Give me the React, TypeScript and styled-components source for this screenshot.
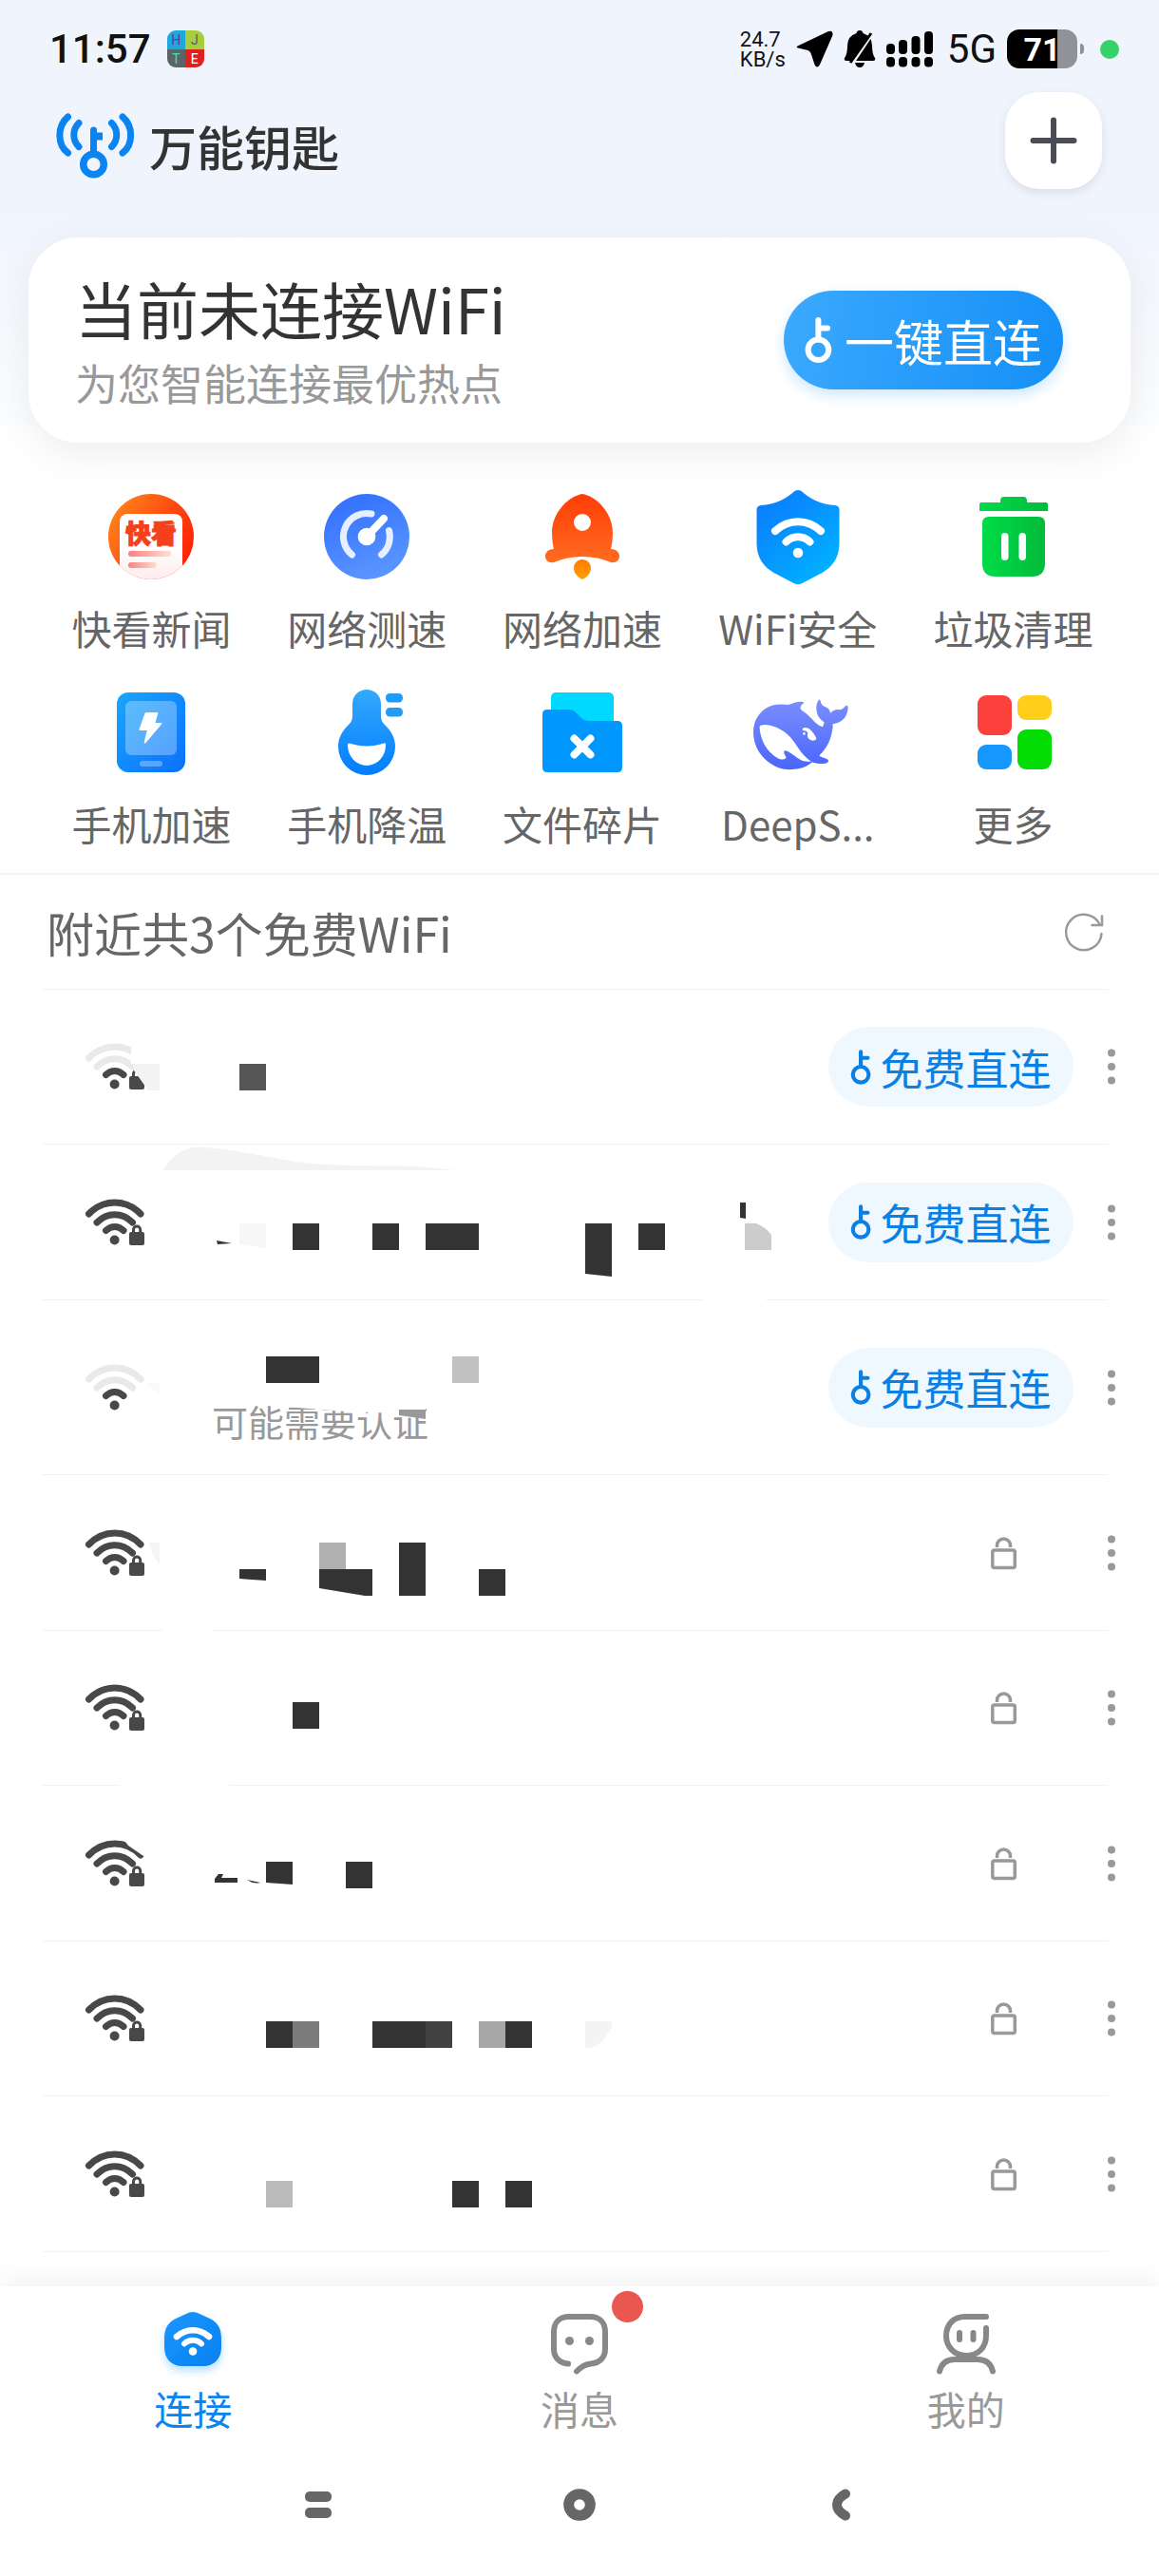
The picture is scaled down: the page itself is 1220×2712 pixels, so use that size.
import React from 'react';
import styled, { createGlobalStyle } from 'styled-components';

const blue = '#0a84f0';
const textDark = '#333';
const textGrey = '#666';
const textLight = '#999';
const line = '#f2f2f2';
const ink = '#333';

const GlobalStyle = createGlobalStyle`
  * {
    box-sizing: border-box;
  }

  body {
    margin: 0;
    background: #fff;
    color: ${textDark};
    font-family: "Noto Sans CJK SC", "Noto Sans", sans-serif;
  }

  button {
    border: 0;
    padding: 0;
    background: none;
    color: inherit;
    font: inherit;
    cursor: pointer;
  }

  a {
    color: inherit;
    text-decoration: none;
  }

  svg {
    display: block;
    flex: none;
    overflow: visible;
  }
`;

const Page = styled.div`
  display: flex;
  flex-direction: column;
  min-height: 100vh;
  background: linear-gradient(#f0f4fd 0, #f0f4fd 220px, #fcfdfe 446px, #fff 450px);
`;

/* Status bar */

const StatusBar = styled.div`
  display: flex;
  align-items: center;
  height: 97px;
  padding: 6px 42px 0 52px;
  color: #111;
  font-family: Roboto, sans-serif;
`;

const Clock = styled.time`
  font-size: 42px;
  font-weight: 500;
  line-height: 48px;
`;

const NoticeIcon = styled.div`
  display: grid;
  grid-template-columns: 1fr 1fr;
  width: 39px;
  height: 39px;
  margin-left: 17px;
  border-radius: 9px;
  overflow: hidden;
`;

const NoticeCell = styled.span<{ $bg: string; $color: string }>`
  background: ${({ $bg }) => $bg};
  color: ${({ $color }) => $color};
  font-size: 14px;
  line-height: 20px;
  text-align: center;
`;

const StatusRight = styled.div`
  display: flex;
  align-items: center;
  gap: 11px;
  margin-left: auto;
`;

const Speed = styled.div`
  font-size: 22px;
  line-height: 21px;
`;

const NetworkType = styled.span`
  margin-left: 4px;
  font-size: 42px;
  line-height: 44px;
`;

const Battery = styled.div`
  position: relative;
  width: 74px;
  height: 41px;
  border-radius: 13px;
  background: linear-gradient(90deg, #000 72%, #919198 72%);
  color: #fff;
  font-size: 34px;
  font-weight: 700;
  line-height: 42px;
  text-align: center;

  &::after {
    content: '';
    position: absolute;
    top: 15px;
    right: -7px;
    width: 4px;
    height: 11px;
    border-radius: 0 4px 4px 0;
    background: #919198;
  }
`;

const PrivacyDot = styled.span`
  width: 20px;
  height: 20px;
  margin-left: 13px;
  border-radius: 50%;
  background: #35d366;
`;

/* Header */

const Header = styled.header`
  display: flex;
  align-items: center;
  justify-content: space-between;
  height: 102px;
  padding: 0 60px 0 56px;
`;

const Brand = styled.h1`
  display: flex;
  align-items: center;
  gap: 13px;
  margin: 0;
  padding-top: 10px;
  font-size: 50px;
  font-weight: 500;
  line-height: 72px;
`;

const AddButton = styled.button`
  display: flex;
  align-items: center;
  justify-content: center;
  width: 102px;
  height: 102px;
  border-radius: 36px;
  background: #fff;
  box-shadow: 0 4px 10px rgba(40, 40, 60, 0.1);
`;

/* Connection card */

const Card = styled.section`
  display: flex;
  align-items: center;
  justify-content: space-between;
  height: 216px;
  margin: 51px 30px 0;
  padding: 0 71px 0 49px;
  border-radius: 52px;
  background: #fff;
  box-shadow: 0 12px 44px rgba(0, 0, 0, 0.07);
`;

const CardText = styled.div`
  padding-top: 4px;
`;

const CardTitle = styled.h2`
  margin: 0;
  font-size: 65px;
  font-weight: 400;
  line-height: 86px;
`;

const CardHint = styled.p`
  margin: 0;
  color: ${textLight};
  font-size: 45px;
  line-height: 72px;
`;

const ConnectButton = styled.button`
  display: flex;
  align-items: center;
  justify-content: center;
  gap: 13px;
  width: 294px;
  height: 104px;
  border-radius: 52px;
  background: linear-gradient(100deg, #3ba9fe, #158ff7);
  box-shadow: 0 6px 14px rgba(26, 146, 248, 0.22);
  color: #fff;
  font-size: 52px;
`;

/* Tools */

const Tools = styled.nav`
  display: grid;
  grid-template-columns: repeat(5, 1fr);
  row-gap: 36px;
  padding: 49px 40px 28px 46px;
  border-bottom: 2px solid #f3f3f3;
`;

const Tool = styled.a`
  display: flex;
  flex-direction: column;
  align-items: center;
  gap: 22px;
  color: ${textGrey};
  font-size: 42px;
  line-height: 48px;
  white-space: nowrap;
`;

/* Network list */

const ListHeader = styled.div`
  display: flex;
  align-items: center;
  justify-content: space-between;
  height: 121px;
  margin: 0 54px 0 45px;
  padding: 0 4px;
  border-bottom: 1px solid ${line};
`;

const ListTitle = styled.h2`
  margin: 0;
  color: ${textGrey};
  font-size: 50px;
  font-weight: 400;
  line-height: 72px;
`;

const List = styled.ul`
  margin: 0 54px 0 45px;
  padding: 0;
  list-style: none;
`;

const Row = styled.li<{ $tall?: boolean }>`
  position: relative;
  display: flex;
  align-items: center;
  height: ${({ $tall }) => ($tall ? 184 : 163)}px;
  padding-left: 44px;
  border-bottom: 1px solid ${line};

  &:nth-child(even) {
    height: 164px;
  }
`;

const NetworkInfo = styled.div`
  flex: 1;
  margin-left: 70px;
`;

const NetworkName = styled.div`
  height: 70px;
`;

const NetworkNote = styled.div`
  color: ${textLight};
  font-size: 38px;
  line-height: 52px;
`;

const Redaction = styled.svg`
  position: absolute;
  top: 0;
  left: 0;
  pointer-events: none;
`;

const FreeButton = styled.button`
  display: flex;
  align-items: center;
  justify-content: center;
  gap: 9px;
  width: 258px;
  height: 84px;
  border-radius: 42px;
  background: #f0f8ff;
  color: #0a80e4;
  font-size: 45px;
`;

const LockButton = styled.button`
  padding: 0 60px;
`;

const MenuButton = styled.button`
  display: flex;
  justify-content: center;
  width: 40px;
  margin: 0 -24px 0 20px;
`;

/* Bottom bars */

const TabBar = styled.nav`
  display: grid;
  grid-template-columns: repeat(3, 1fr);
  margin-top: auto;
  padding: 23px 0 27px;
  background: #fff;
  box-shadow: 0 -8px 24px rgba(0, 0, 0, 0.05);
`;

const Tab = styled.a<{ $active?: boolean }>`
  display: flex;
  flex-direction: column;
  align-items: center;
  gap: 7px;
  color: ${({ $active }) => ($active ? blue : textLight)};
  font-size: 41px;
  line-height: 52px;
`;

const TabIcon = styled.span`
  position: relative;
`;

const Badge = styled.span`
  position: absolute;
  top: -18px;
  right: -31px;
  width: 33px;
  height: 33px;
  border-radius: 50%;
  background: #ea5650;
`;

const SystemBar = styled.div`
  display: flex;
  align-items: center;
  justify-content: center;
  gap: 235px;
  height: 124px;
  padding-bottom: 26px;
  background: #fff;
`;

const SystemButton = styled.button`
  display: flex;
  justify-content: center;
  width: 40px;
`;

const KeyIcon: React.FC<{ height: number; weight?: number }> = ({ height, weight = 4 }) => (
  <svg
    width={height * 0.6}
    height={height}
    viewBox="0 0 24 40"
    fill="none"
    stroke="currentColor"
    strokeWidth={weight}
    strokeLinecap="round"
    strokeLinejoin="round"
  >
    <circle cx="12" cy="28.5" r="9" />
    <path d="M12 19.500V2.500M12 9.500h8" />
  </svg>
);

const WifiIcon: React.FC<{ weak?: boolean; locked?: boolean }> = ({ weak, locked }) => {
  const far = weak ? '#e9e9e9' : '#484848';

  return (
    <svg width="64" height="52" viewBox="0 0 64 52" fill="none" strokeWidth="7" strokeLinecap="round">
      <path d="M4.500 17C20 1 43.500 1 59 17" stroke={far} />
      <path d="M13 26C24 15 39.500 15 50.500 26" stroke={far} />
      <path d="M22.500 34.500C28 29 35.500 29 41 34.500" stroke="#484848" />
      <circle cx="31.600" cy="44.500" r="5" fill="#484848" />
      {locked && (
        <>
          <rect x="47" y="36" width="16" height="14" rx="2" fill="#484848" />
          <path d="M51.500 37v-3.500a3.600 3.600 0 0 1 7.200 0V37" stroke="#484848" strokeWidth="3" />
        </>
      )}
    </svg>
  );
};

const LockIcon = () => (
  <svg width="27" height="34" viewBox="0 0 27 34" fill="none" stroke="#999" strokeWidth="3.500">
    <rect x="1.800" y="14" width="23.500" height="18.500" rx="2" />
    <path d="M6.500 11V9a7 7 0 0 1 14 0v2" />
  </svg>
);

const DotsIcon = () => (
  <svg width="8" height="38" viewBox="0 0 8 38" fill="#999">
    <circle cx="4" cy="4.500" r="4" />
    <circle cx="4" cy="19" r="4" />
    <circle cx="4" cy="33.500" r="4" />
  </svg>
);

const LogoIcon = () => (
  <svg width="88" height="72" viewBox="0 0 88 72" fill="none" stroke={blue} strokeWidth="7" strokeLinecap="round">
    <path d="M15.500 6C4 16 4 35 15.500 44M27 12.500c-7 7-7 18 0 25" />
    <path d="M73 6c11.500 10 11.500 29 0 38M61.500 12.500c7 7 7 18 0 25" />
    <path d="M42.500 20v24" />
    <path d="M44 26.500h8" strokeLinecap="butt" strokeWidth="8" />
    <circle cx="42.500" cy="56" r="10.800" strokeWidth="7.500" />
  </svg>
);

const NewsIcon = () => (
  <svg width="100" height="100" viewBox="0 0 100 100">
    <defs>
      <linearGradient id="news" x1="0" y1="0.200" x2="1" y2="0.800">
        <stop stopColor="#ff8a1c" />
        <stop offset="1" stopColor="#fd1406" />
      </linearGradient>
      <linearGradient id="paper" x1="0" y1="0" x2="0" y2="1">
        <stop offset="0.400" stopColor="#fff" />
        <stop offset="1" stopColor="#ffe6e8" />
      </linearGradient>
      <linearGradient id="stripe">
        <stop stopColor="#f98080" />
        <stop offset="1" stopColor="#fde0d4" />
      </linearGradient>
      <clipPath id="disc"><circle cx="50" cy="50" r="45" /></clipPath>
    </defs>
    <g clipPath="url(#disc)">
      <rect width="100" height="100" fill="url(#news)" />
      <rect x="17" y="26" width="66" height="80" rx="8" fill="url(#paper)" />
    </g>
    <text
      x="50"
      y="57"
      fill="#f5401c"
      stroke="#f5401c"
      strokeWidth="1"
      fontSize="27"
      fontWeight="900"
      textAnchor="middle"
    >
      快看
    </text>
    <rect x="26" y="65" width="45" height="6" rx="3" fill="url(#stripe)" />
    <rect x="26" y="77" width="30" height="6" rx="3" fill="url(#stripe)" />
  </svg>
);

const SpeedIcon = () => (
  <svg width="100" height="100" viewBox="0 0 100 100" fill="none" strokeLinecap="round">
    <defs>
      <linearGradient id="gauge" x1="0.300" y1="0" x2="0.700" y2="1">
        <stop stopColor="#3370ff" />
        <stop offset="1" stopColor="#5c98ff" />
      </linearGradient>
    </defs>
    <circle cx="50" cy="50" r="45" fill="url(#gauge)" />
    <path d="M55 26A24.500 24.500 0 0 0 34.500 69M73.500 43.500A24.500 24.500 0 0 1 65.500 69" stroke="#e6eeff" strokeWidth="7" />
    <path d="M50 50 68 31" stroke="#fff" strokeWidth="8" />
    <circle cx="50" cy="50" r="9.300" fill="#fff" />
  </svg>
);

const RocketIcon = () => (
  <svg width="100" height="100" viewBox="0 0 100 100">
    <defs>
      <linearGradient id="rocket" x1="0" y1="0" x2="0" y2="1">
        <stop stopColor="#ff3d06" />
        <stop offset="1" stopColor="#ff6c20" />
      </linearGradient>
      <linearGradient id="flame" x1="0" y1="0" x2="0" y2="1">
        <stop stopColor="#ff7a00" />
        <stop offset="1" stopColor="#ffa000" />
      </linearGradient>
    </defs>
    <path
      fill="url(#rocket)"
      fillRule="evenodd"
      d="M50 5C37 7 18 23 18 46c0 7 1 13 2 17-5 0-9 3-9 7.500 0 5 4 7.500 9 6.500 9-4 19-6 30-6s21 2 30 6c5 1 9-1.500 9-6.500 0-4.500-4-7.500-9-7.500 1-4 2-10 2-17C82 23 63 7 50 5Zm0 21a9 9 0 1 1 0 18 9 9 0 0 1 0-18Z"
    />
    <path fill="url(#flame)" d="M50 74c5 0 9 4 9 9 0 6-5 10-9 12-4-2-9-6-9-12 0-5 4-9 9-9Z" />
  </svg>
);

const ShieldIcon = () => (
  <svg width="100" height="100" viewBox="0 0 100 100" fill="none" strokeLinecap="round">
    <defs>
      <linearGradient id="shield" x1="0.200" y1="0.100" x2="0.800" y2="0.900">
        <stop stopColor="#0a80ff" />
        <stop offset="1" stopColor="#00b0ff" />
      </linearGradient>
    </defs>
    <path
      fill="url(#shield)"
      d="M46.500 2c2-1.500 5-1.500 7 0C65 12 76 16 89 17c3 .5 4.500 2 4.500 5v35c0 16-8 25-18 31-8 4-15 8-22 11.500q-3.500 1.500-7 0c-7-3.500-14-7.500-22-11.500-10-6-18-15-18-31V22c0-3 1.500-4.500 4.500-5C24 16 35 12 46.500 2Z"
    />
    <path d="M26 44c14-13 34-13 48 0" stroke="#fff" strokeWidth="8" />
    <path d="M37.500 55.500c7-7 18-7 25 0" stroke="#fff" strokeWidth="8" />
    <circle cx="50" cy="67" r="5.300" fill="#fff" />
  </svg>
);

const TrashIcon = () => (
  <svg width="100" height="100" viewBox="0 0 100 100">
    <defs>
      <linearGradient id="trash">
        <stop stopColor="#00db48" />
        <stop offset="1" stopColor="#04bb3b" />
      </linearGradient>
    </defs>
    <path fill="url(#trash)" d="M16 14h20v-2q0-4 4-4h20q4 0 4 4v2h20q2 0 2 2v7H14v-7q0-2 2-2Z" />
    <path fill="url(#trash)" d="M24 29h52q7 0 7 7v42q0 14-14 14H31q-14 0-14-14V36q0-7 7-7Z" />
    <rect x="37" y="46" width="7.500" height="29" rx="3.700" fill="#fff" />
    <rect x="55.500" y="46" width="7.500" height="29" rx="3.700" fill="#fff" />
  </svg>
);

const PhoneIcon = () => (
  <svg width="100" height="100" viewBox="0 0 100 100">
    <defs>
      <linearGradient id="phone" x1="0" y1="0" x2="1" y2="1">
        <stop stopColor="#18a6fe" />
        <stop offset="1" stopColor="#0c70fc" />
      </linearGradient>
    </defs>
    <rect x="14" y="8" width="72" height="84" rx="12" fill="url(#phone)" />
    <rect x="23" y="17" width="54" height="57" rx="6" fill="#fff" opacity="0.300" />
    <path d="M45 29h11.500q1 0 .7 1L54.500 40h6q1.500 0 .5 1.500L44.500 61q-2 2-1.700-1l2.900-12h-7.200q-1.500 0-1-1.500L43.500 30q.5-1 1.500-1Z" fill="#fff" />
    <rect x="38" y="80" width="24" height="6" rx="3" fill="#fff" opacity="0.300" />
  </svg>
);

const CoolIcon = () => (
  <svg width="100" height="100" viewBox="0 0 100 100">
    <defs>
      <linearGradient id="cool" x1="0" y1="0" x2="0" y2="1">
        <stop stopColor="#34a9fe" />
        <stop offset="1" stopColor="#027dfd" />
      </linearGradient>
    </defs>
    <path fill="url(#cool)" d="M50 5c8.500 0 15 6.500 15 15v12c0 6 2 8 5 11 6 6 10 13 10 22a30 30 0 0 1-60 0c0-9 4-16 10-22 3-3 5-5 5-11V20c0-8.500 6.500-15 15-15Z" />
    <path fill="#fff" d="M30 63q0-2 2-1.500c12 4 24 4 36 0 2-.5 2 .5 2 2a20 21.500 0 0 1-40 0Z" />
    <rect x="70" y="9" width="18" height="9.500" rx="4.500" fill="#1f9bf8" />
    <rect x="70" y="24" width="18" height="9.500" rx="4.500" fill="#1f9bf8" />
  </svg>
);

const FolderIcon = () => (
  <svg width="100" height="100" viewBox="0 0 100 100">
    <rect x="17" y="8" width="66" height="50" rx="5" fill="#00d8ff" />
    <path fill="#0098ff" d="M13 26h24q3 0 5 2l7 7q3 3 7 3h31q5 0 5 5v44q0 5-5 5H13q-5 0-5-5V31q0-5 5-5Z" />
    <path d="m41.500 56.500 17 17m0-17-17 17" stroke="#fff" strokeWidth="8" strokeLinecap="round" />
  </svg>
);

const WhaleIcon = () => (
  <svg width="100" height="100" viewBox="0 0 100 100">
    <defs>
      <linearGradient id="whale" x1="0" y1="0" x2="0" y2="1">
        <stop stopColor="#7b8eff" />
        <stop offset="1" stopColor="#4a66fb" />
      </linearGradient>
    </defs>
    <path
      transform="translate(3 3.400) scale(4.150)"
      fill="url(#whale)"
      d="M23.748 4.482c-.254-.124-.364.113-.512.234-.051.039-.094.09-.137.136-.372.397-.806.657-1.373.626-.829-.046-1.537.214-2.163.848-.133-.782-.575-1.248-1.247-1.548-.352-.156-.708-.311-.955-.65-.172-.241-.219-.51-.305-.774-.055-.16-.11-.323-.293-.35-.2-.031-.278.136-.356.276-.313.572-.434 1.202-.422 1.84.027 1.436.633 2.58 1.838 3.393.137.093.172.187.129.323-.082.28-.18.552-.266.833-.055.179-.137.217-.329.14a5.526 5.526 0 01-1.736-1.18c-.857-.828-1.631-1.742-2.597-2.458a11.365 11.365 0 00-.689-.471c-.985-.957.13-1.743.388-1.836.27-.098.093-.432-.779-.428-.872.004-1.67.295-2.687.684a3.055 3.055 0 01-.465.137 9.597 9.597 0 00-2.883-.102c-1.885.21-3.39 1.102-4.497 2.623C.082 8.606-.231 10.684.152 12.85c.403 2.284 1.569 4.175 3.36 5.653 1.858 1.533 3.997 2.284 6.438 2.14 1.482-.085 3.133-.284 4.994-1.86.47.234.962.327 1.78.397.63.059 1.236-.03 1.705-.128.735-.156.684-.837.419-.961-2.155-1.004-1.682-.595-2.113-.926 1.096-1.296 2.746-2.642 3.392-7.003.05-.347.007-.565 0-.845-.004-.17.035-.237.23-.256a4.173 4.173 0 001.545-.475c1.396-.763 1.96-2.015 2.093-3.517.02-.23-.004-.467-.247-.588zM11.581 18c-2.089-1.642-3.102-2.183-3.52-2.16-.392.024-.321.471-.235.763.09.288.207.486.371.739.114.167.192.416-.113.603-.673.416-1.842-.14-1.897-.167-1.361-.802-2.5-1.86-3.301-3.307-.774-1.393-1.224-2.887-1.298-4.482-.02-.386.093-.522.477-.592a4.696 4.696 0 011.529-.039c2.132.312 3.946 1.265 5.468 2.774.868.86 1.525 1.887 2.202 2.891.72 1.066 1.494 2.082 2.48 2.914.348.292.625.514.891.677-.802.09-2.14.11-3.054-.614zm1-6.44a.306.306 0 01.415-.287.302.302 0 01.2.288.306.306 0 01-.31.307.303.303 0 01-.304-.308zm3.11 1.596c-.2.081-.399.151-.59.16a1.245 1.245 0 01-.798-.254c-.274-.23-.47-.358-.552-.758a1.73 1.73 0 01.016-.588c.07-.327-.008-.537-.239-.727-.187-.156-.426-.199-.688-.199a.559.559 0 01-.254-.078c-.11-.054-.2-.19-.114-.358.028-.054.16-.186.192-.21.356-.202.767-.136 1.146.016.352.144.618.408 1.001.782.391.451.462.576.685.914.176.265.336.537.445.848.067.195-.019.354-.25.452z"
    />
  </svg>
);

const MoreIcon = () => (
  <svg width="100" height="100" viewBox="0 0 100 100">
    <rect x="12" y="11" width="36" height="42" rx="9" fill="#fc403c" />
    <rect x="54" y="11" width="36" height="26" rx="9" fill="#fdce1a" />
    <rect x="54" y="47" width="36" height="42" rx="9" fill="#04dc06" />
    <rect x="12" y="63" width="36" height="26" rx="9" fill="#1598fd" />
  </svg>
);

const ConnectTabIcon = () => (
  <svg width="72" height="72" viewBox="0 0 72 72" fill="none" strokeLinecap="round">
    <defs>
      <linearGradient id="tab" x1="0" y1="0" x2="1" y2="1">
        <stop stopColor="#1c97fd" />
        <stop offset="1" stopColor="#0680f0" />
      </linearGradient>
      <filter id="glow" x="-30%" y="-30%" width="160%" height="170%">
        <feDropShadow dx="0" dy="5" stdDeviation="4" floodColor="#1c97fd" floodOpacity="0.300" />
      </filter>
    </defs>
    <path
      fill="url(#tab)"
      filter="url(#glow)"
      d="M29 6q7-4 14 0l12 5.500C63 16 66 22 66 33v8c0 12-7 20-19 20H25C13 61 6 53 6 41v-8c0-11 3-17 11-21.500Z"
    />
    <path d="M19 30c10-9 24-9 34 0" stroke="#fff" strokeWidth="6.500" />
    <path d="M27 37.500c5-5 13-5 18 0" stroke="#fff" strokeWidth="6" />
    <circle cx="36" cy="45.500" r="4.300" fill="#fff" />
  </svg>
);

const MessageTabIcon = () => (
  <svg width="72" height="72" viewBox="0 0 72 72" fill="none" stroke="#888" strokeWidth="6" strokeLinecap="round">
    <path d="M24 58.500C14 58 9 51 9 43V25C9 15 15 9 25 9h22c10 0 16 6 16 16v18c0 9-6 15-15 15.500-6 .5-10 3-15 8" />
    <circle cx="25.500" cy="34.500" r="4.500" fill="#888" stroke="none" />
    <circle cx="46.500" cy="34.500" r="4.500" fill="#888" stroke="none" />
  </svg>
);

const MineTabIcon = () => (
  <svg width="72" height="72" viewBox="0 0 72 72" fill="none" stroke="#888" strokeWidth="6" strokeLinecap="round">
    <path d="M57 9H35C22 9 15 18 15 29s8 21 21 21 21-9 21-21v-8" />
    <path d="M8 66.500C10 58 16 54 24 54h24c8 0 14 4 16 12.500" />
    <path d="M29 26v7M43.500 26v7" />
  </svg>
);

interface Mark {
  d: string;
  fill?: string;
}

interface Network {
  tall?: boolean;
  weak?: boolean;
  open?: boolean;
  free?: boolean;
  note?: string;
  marks: Mark[];
}

const tools = [
  { label: '快看新闻', icon: <NewsIcon /> },
  { label: '网络测速', icon: <SpeedIcon /> },
  { label: '网络加速', icon: <RocketIcon /> },
  { label: 'WiFi安全', icon: <ShieldIcon /> },
  { label: '垃圾清理', icon: <TrashIcon /> },
  { label: '手机加速', icon: <PhoneIcon /> },
  { label: '手机降温', icon: <CoolIcon /> },
  { label: '文件碎片', icon: <FolderIcon /> },
  { label: 'DeepS...', icon: <WhaleIcon /> },
  { label: '更多', icon: <MoreIcon /> },
];

// Names are hidden, what is left of each one is a handful of blocks
const networks: Network[] = [
  {
    weak: true,
    free: true,
    marks: [
      { d: 'M138 46h34v32h-34z', fill: '#fff' },
      { d: 'M140 78h28v28h-12l-5-7-10-14z', fill: '#f3f3f3' },
      { d: 'M252 78h28v28h-28z', fill: '#565656' },
    ],
  },
  {
    free: true,
    marks: [
      { d: 'M172 27C184 6 200 2 215 3c25 1 65 10 96 15s89 4 129 5l39 4z', fill: '#f3f3f3' },
      { d: 'M228 101l16 3-15 1z' },
      { d: 'M252 83h28v26l-28-4z', fill: '#f7f7f7' },
      { d: 'M308 83h28v28h-28zM392 83h28v28h-28zM448 83h56v28h-56zM672 83h28v28h-28z' },
      { d: 'M616 83h28v56l-28-3z' },
      { d: 'M779 61h6v17l-6-1z' },
      { d: 'M784 83h12q10 4 16 12v16h-28z', fill: '#ccc' },
      { d: 'M740 161h66v4h-66z', fill: '#fff' },
    ],
  },
  {
    tall: true,
    weak: true,
    open: true,
    free: true,
    note: '可能需要认证',
    marks: [
      { d: 'M280 59h56v28h-56z' },
      { d: 'M476 59h28v28h-28z', fill: '#c1c1c1' },
      { d: 'M300 106h148v14l-84-3-64-5z', fill: '#fff' },
      { d: 'M420 115h28v10l-28-4z', fill: textLight },
      { d: 'M154 87h14v12z', fill: '#fafafa' },
    ],
  },
  {
    marks: [
      { d: 'M157 71h11v23q-9-10-11-23z', fill: '#f5f5f5' },
      { d: 'M252 99h28v12l-28-2z' },
      { d: 'M336 71h28v28h-28z', fill: '#b0b0b0' },
      { d: 'M336 99h56v28h-8l-48-8z' },
      { d: 'M420 71h28v56h-28zM504 99h28v28h-28z' },
      { d: 'M171 161h53v4h-53z', fill: '#fff' },
    ],
  },
  {
    marks: [
      { d: 'M308 75h28v28h-28z' },
      { d: 'M126 160h115v4H126z', fill: '#fff' },
    ],
  },
  {
    marks: [
      { d: 'M129 55l6 8 16 11 6-4-4-20z', fill: '#fff' },
      { d: 'M226 102v-4l4-5h5l-2 4h17v5z' },
      { d: 'M260 99l14 3q-7 2-14-3z' },
      { d: 'M280 80h28v24l-28-2zM364 80h28v28h-28z' },
    ],
  },
  {
    marks: [
      { d: 'M280 84h28v28h-28zM392 84h56v28h-56zM532 84h28v28h-28z' },
      { d: 'M308 84h28v28h-28z', fill: '#7b7b7b' },
      { d: 'M448 84h28v28h-28z', fill: '#414141' },
      { d: 'M504 84h28v28h-28z', fill: '#a7a7a7' },
      { d: 'M616 84h28v5q-6 16-21 23h-7z', fill: '#f4f4f4' },
    ],
  },
  {
    marks: [
      { d: 'M280 89h28v28h-28z', fill: '#bbb' },
      { d: 'M476 89h28v28h-28zM532 89h28v28h-28z' },
    ],
  },
];

const tabs = [
  { label: '连接', icon: <ConnectTabIcon />, active: true },
  { label: '消息', icon: <MessageTabIcon />, badge: true },
  { label: '我的', icon: <MineTabIcon /> },
];

const PhoneStatus: React.FC = () => (
  <StatusBar>
    <Clock>11:57</Clock>
    <NoticeIcon>
      <NoticeCell $bg="#1da7dd" $color="#5b3f87">H</NoticeCell>
      <NoticeCell $bg="#a7cd3a" $color="#5a5a6e">J</NoticeCell>
      <NoticeCell $bg="#5d6466" $color="#3ee0b0">T</NoticeCell>
      <NoticeCell $bg="#e02020" $color="#fff">E</NoticeCell>
    </NoticeIcon>
    <StatusRight>
      <Speed>
        24.7
        <br />
        KB/s
      </Speed>
      <svg width="39" height="39" viewBox="0 0 39 39">
        <path d="M2.500 16 34 1q5-1.500 4.500 4L25 36q-3 5-5.500 0l-4-12q-.8-2-3-3L2 18.500q-3-1 .5-2.500Z" fill="#000" />
      </svg>
      <svg width="34" height="39" viewBox="0 0 34 39">
        <path
          d="M17 0q3 0 3.500 3Q30 6 30 16q0 9 3 13 1 3-2 3H3q-3 0-2-3 3-4 3-13Q4 6 13.500 3 14 0 17 0ZM12 34h10q-1 5-5 5t-5-5Z"
          fill="#000"
        />
        <path d="M32 1 8 37" stroke="#f0f4fd" strokeWidth="3" />
        <path d="M29 3 7 34" stroke="#000" strokeWidth="3" />
      </svg>
      <svg width="49" height="38" viewBox="0 0 49 38" fill="#000">
        <rect x="0" y="13" width="9" height="11" rx="4" />
        <rect x="13" y="9" width="9" height="15" rx="4" />
        <rect x="26.500" y="5" width="9" height="19" rx="4" />
        <rect x="40" y="0" width="9" height="24" rx="4" />
        <rect x="0" y="27" width="9" height="10.500" rx="4" />
        <rect x="13" y="27" width="9" height="10.500" rx="4" />
        <rect x="26.500" y="27" width="9" height="10.500" rx="4" />
        <rect x="40" y="27" width="9" height="10.500" rx="4" />
      </svg>
      <NetworkType>5G</NetworkType>
      <Battery>71</Battery>
      <PrivacyDot />
    </StatusRight>
  </StatusBar>
);

const NetworkRow: React.FC<{ network: Network }> = ({ network }) => (
  <Row $tall={network.tall}>
    <WifiIcon weak={network.weak} locked={!network.open} />
    <NetworkInfo>
      {network.note && (
        <>
          <NetworkName />
          <NetworkNote>{network.note}</NetworkNote>
        </>
      )}
    </NetworkInfo>
    <Redaction width="815" height="163" viewBox="45 0 815 163" aria-hidden="true">
      {network.marks.map(({ d, fill = ink }) => (
        <path key={d} d={d} fill={fill} />
      ))}
    </Redaction>
    {network.free ? (
      <FreeButton type="button">
        <KeyIcon height={37} weight={4.5} />
        免费直连
      </FreeButton>
    ) : (
      <LockButton type="button" aria-label="需要密码">
        <LockIcon />
      </LockButton>
    )}
    <MenuButton type="button" aria-label="更多操作">
      <DotsIcon />
    </MenuButton>
  </Row>
);

const App: React.FC = () => (
  <>
    <GlobalStyle />
    <Page>
      <PhoneStatus />
      <Header>
        <Brand>
          <LogoIcon />
          万能钥匙
        </Brand>
        <AddButton type="button" aria-label="添加">
          <svg width="50" height="50" viewBox="0 0 50 50" stroke="#4a4c58" strokeWidth="6" strokeLinecap="round">
            <path d="M25 3.500v43M3.500 25h43" />
          </svg>
        </AddButton>
      </Header>
      <Card>
        <CardText>
          <CardTitle>当前未连接WiFi</CardTitle>
          <CardHint>为您智能连接最优热点</CardHint>
        </CardText>
        <ConnectButton type="button">
          <KeyIcon height={48} weight={5} />
          一键直连
        </ConnectButton>
      </Card>
      <Tools>
        {tools.map(({ label, icon }) => (
          <Tool key={label} href="#tool">
            {icon}
            {label}
          </Tool>
        ))}
      </Tools>
      <ListHeader>
        <ListTitle>附近共3个免费WiFi</ListTitle>
        <button type="button" aria-label="刷新">
          <svg width="41" height="40" viewBox="0 0 41 40" fill="none" stroke="#999" strokeWidth="2.500" strokeLinecap="round">
            <path d="M38.500 22A18.700 18.700 0 1 1 36.500 12" />
            <path d="M39 3.500V13H28.500" />
          </svg>
        </button>
      </ListHeader>
      <List>
        {networks.map((network, index) => (
          <NetworkRow key={index} network={network} />
        ))}
      </List>
      <TabBar>
        {tabs.map(({
          label, icon, active, badge,
        }) => (
          <Tab key={label} href="#tab" $active={active}>
            <TabIcon>
              {icon}
              {badge && <Badge />}
            </TabIcon>
            {label}
          </Tab>
        ))}
      </TabBar>
      <SystemBar>
        <SystemButton type="button" aria-label="最近任务">
          <svg width="28" height="28" viewBox="0 0 28 28" fill="#666">
            <rect width="28" height="11" rx="5" />
            <rect y="17" width="28" height="11" rx="5" />
          </svg>
        </SystemButton>
        <SystemButton type="button" aria-label="主屏幕">
          <svg width="34" height="34" viewBox="0 0 34 34" fill="none" stroke="#666" strokeWidth="11">
            <circle cx="17" cy="17" r="11.300" />
          </svg>
        </SystemButton>
        <SystemButton type="button" aria-label="返回">
          <svg width="20" height="34" viewBox="0 0 20 34" fill="none" stroke="#666" strokeWidth="10" strokeLinecap="round">
            <path d="M15 5.500C3 12 3 22 15 28.500" />
          </svg>
        </SystemButton>
      </SystemBar>
    </Page>
  </>
);

export default App;
